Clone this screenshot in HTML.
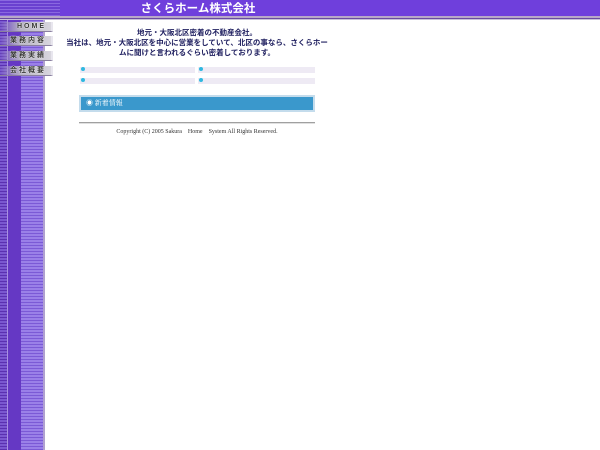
<!DOCTYPE html>
<html><head><meta charset="utf-8"><style>
*{margin:0;padding:0;box-sizing:border-box}
body{width:600px;height:450px;background:#fff;position:relative;overflow:hidden;font-family:"Liberation Serif","Noto Serif CJK SC","Noto Sans CJK JP",serif}
.hdr{position:absolute;left:0;top:0;width:600px;height:16px;background:#6f3fdc}
.hl1{position:absolute;left:0;top:16px;width:600px;height:2px;background:#b8a8c8}
.hl2{position:absolute;left:0;top:18px;width:600px;height:1px;background:#6a4aa0}
.hl3{position:absolute;left:0;top:19px;width:600px;height:1px;background:#c8c0d8}
.corner{position:absolute;left:0;top:0;width:60px;height:18px;background:repeating-linear-gradient(#8a68e0 0 1px,#6a40d0 1px 3px)}
.title{position:absolute;left:0;top:3px;width:396px;text-align:center;color:#fff;font-family:"Liberation Sans","Noto Sans CJK JP",sans-serif;font-size:11.5px;line-height:13px;font-weight:bold}
.s1{position:absolute;left:0;top:20px;width:7px;height:430px;background:repeating-linear-gradient(#5a30b0 0 1px,#7a58d0 1px 3px)}
.s2{position:absolute;left:7px;top:20px;width:14px;height:430px;background:#6538c4;border-left:1px solid #a890e0}
.s3{position:absolute;left:21px;top:20px;width:22px;height:430px;background:repeating-linear-gradient(#7b5ad6 0 1px,#9a80e8 1px 3px)}
.s4{position:absolute;left:43px;top:20px;width:2px;height:430px;background:#b0a0d0}
.btn{position:absolute;left:0;width:53px;height:10px;background:linear-gradient(90deg,rgba(120,90,200,0.3) 0,#b8b4c4 40%,#d8d6de 100%);border-right:2px solid #e8e6ee;border-bottom:1px solid #8a80a0;color:#333;font-size:7px;line-height:10px;text-align:right;padding-right:5px;letter-spacing:2px;font-family:"Liberation Sans","Noto Sans CJK JP",sans-serif;font-weight:bold;text-shadow:0 0 1px #fff,0 0 1px #fff}
.txt{position:absolute;left:62px;width:270px;text-align:center;color:#202060;font-size:7.5px;line-height:9.5px;font-family:"Liberation Sans","Noto Sans CJK JP",sans-serif;font-weight:bold}
.box{position:absolute;height:6px;background:#eeeaf4}
.box i{position:absolute;left:1px;top:0;width:4px;height:4px;border-radius:50%;background:#30b8e0}
.news{position:absolute;left:79px;top:95px;width:236px;height:17px;background:#3a98cc;border:2px solid #c4dcec;color:#fff;font-size:7px;line-height:13px;padding-left:5px}
.hr{position:absolute;left:79px;top:122px;width:236px;height:2px;border-top:1px solid #a0a0a0;border-bottom:1px solid #e0e0e0}
.cp{position:absolute;left:79px;top:126px;width:236px;text-align:center;font-size:6px;color:#333}
</style></head><body>
<div class="hdr"></div><div class="corner"></div><div class="hl1"></div><div class="hl2"></div><div class="hl3"></div>
<div class="title">さくらホーム株式会社</div>
<div class="s1"></div><div class="s2"></div><div class="s3"></div><div class="s4"></div>
<div class="btn" style="top:22px">HOME</div>
<div class="btn" style="top:36px">業務内容</div>
<div class="btn" style="top:51px">業務実績</div>
<div class="btn" style="top:66px">会社概要</div>
<div class="txt" style="top:28px">地元・大阪北区密着の不動産会社。</div>
<div class="txt" style="top:38px;left:64px;width:266px">当社は、地元・大阪北区を中心に営業をしていて、北区の事なら、さくらホームに聞けと言われるぐらい密着しております。</div>
<div class="box" style="left:80px;top:67px;width:115px"><i></i></div>
<div class="box" style="left:198px;top:67px;width:117px"><i></i></div>
<div class="box" style="left:80px;top:78px;width:115px"><i></i></div>
<div class="box" style="left:198px;top:78px;width:117px"><i></i></div>
<div class="news">◉ 新着情報</div>
<div class="hr"></div>
<div class="cp">Copyright (C) 2005 Sakura　Home　System All Rights Reserved.</div>
</body></html>
